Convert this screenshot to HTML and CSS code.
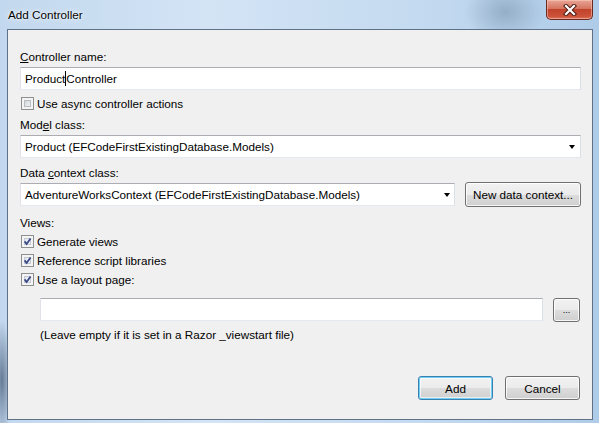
FILE: index.html
```html
<!DOCTYPE html>
<html lang="en">
<head>
    <meta charset="UTF-8">
    <meta name="viewport" content="width=device-width, initial-scale=1.0">
    <title>Add Controller</title>
    <link rel="stylesheet" href="styles.css">
</head>
<body>
    <div class="window">
        <div class="title-bar">
            <span class="title">Add Controller</span>
            <button class="close-btn" aria-label="Close">
                <svg width="14" height="12" viewBox="0 0 14 12">
                    <path d="M3 2 L11 10 M11 2 L3 10" stroke="#4b1d14" stroke-width="4.2" stroke-linecap="square"/>
                    <path d="M3 2 L11 10 M11 2 L3 10" stroke="#fff" stroke-width="2.2" stroke-linecap="square"/>
                </svg>
            </button>
        </div>

        <div class="client">
            <label class="field-label"><u>C</u>ontroller name:</label>
            <div class="textbox">Product<span class="caret"></span>Controller</div>

            <div class="check-row async-row">
                <span class="checkbox"></span>
                <span>Use async controller actions</span>
            </div>

            <label class="field-label model-label">Mod<u>e</u>l class:</label>
            <div class="textbox dropdown">
                <span>Product (EFCodeFirstExistingDatabase.Models)</span>
                <span class="arrow"></span>
            </div>

            <label class="field-label context-label">Data <u>c</u>ontext class:</label>
            <div class="context-row">
                <div class="textbox dropdown">
                    <span>AdventureWorksContext (EFCodeFirstExistingDatabase.Models)</span>
                    <span class="arrow"></span>
                </div>
                <button class="btn new-context-btn">New data context...</button>
            </div>

            <label class="field-label views-label">Views:</label>
            <div class="views-group">
                <div class="check-row">
                    <span class="checkbox checked">
                        <svg width="11" height="11" viewBox="0 0 11 11"><path d="M2.6 5.4 L4.6 8 L8.6 2.4" fill="none" stroke="#3c4a86" stroke-width="1.8"/></svg>
                    </span>
                    <span>Generate views</span>
                </div>
                <div class="check-row">
                    <span class="checkbox checked">
                        <svg width="11" height="11" viewBox="0 0 11 11"><path d="M2.6 5.4 L4.6 8 L8.6 2.4" fill="none" stroke="#3c4a86" stroke-width="1.8"/></svg>
                    </span>
                    <span>Reference script libraries</span>
                </div>
                <div class="check-row">
                    <span class="checkbox checked">
                        <svg width="11" height="11" viewBox="0 0 11 11"><path d="M2.6 5.4 L4.6 8 L8.6 2.4" fill="none" stroke="#3c4a86" stroke-width="1.8"/></svg>
                    </span>
                    <span>Use a layout page:</span>
                </div>
            </div>

            <div class="layout-row">
                <div class="textbox layout-box"></div>
                <button class="btn browse-btn">...</button>
            </div>
            <p class="hint">(Leave empty if it is set in a Razor _viewstart file)</p>

            <div class="footer">
                <button class="btn btn-default">Add</button>
                <button class="btn">Cancel</button>
            </div>
        </div>
    </div>
</body>
</html>
```

FILE: styles.css
```css
* {
    box-sizing: border-box;
    margin: 0;
    padding: 0;
}

body {
    width: 599px;
    height: 423px;
    overflow: hidden;
    font-family: "Liberation Sans", Arial, sans-serif;
    font-size: 11.7px;
    color: #000;
}

.window {
    width: 599px;
    height: 423px;
    display: flex;
    flex-direction: column;
    background:
        radial-gradient(ellipse 40px 30px at 505px 12px, rgba(120,145,170,0.55), transparent),
        radial-gradient(ellipse 10px 60px at 2px 380px, rgba(40,60,90,0.6), transparent),
        linear-gradient(to right, #c2d8ee, #d3e4f5 35%, #c4daf0 70%, #aecbe8);
}

.title-bar {
    height: 29px;
    flex: none;
    display: flex;
    align-items: flex-start;
    padding-left: 8px;
}

.title {
    line-height: 29px;
    text-shadow: 0 0 6px rgba(255,255,255,0.95), 0 0 2px #fff;
}

.close-btn {
    margin-left: auto;
    margin-right: 6px;
    width: 47px;
    height: 20px;
    border: 1px solid #6b2a20;
    border-top: none;
    border-radius: 0 0 5px 5px;
    background: linear-gradient(#e8a595, #d57560 45%, #c2432c 50%, #cc5138 85%, #d9735a);
    box-shadow: inset 0 0 0 1px rgba(255,210,200,0.5);
    display: flex;
    align-items: center;
    justify-content: center;
}

.client {
    flex: 1;
    margin: 0 6px 3px 7px;
    border: 1px solid #5f7186;
    background: #f0f0f0;
    padding: 19px 11px 19px 12px;
    display: flex;
    flex-direction: column;
}

.field-label {
    display: block;
    line-height: 16px;
}

.textbox {
    height: 23px;
    margin-top: 2px;
    background: #fff;
    border: 1px solid;
    border-color: #abadb3 #dbdfe6 #e3e9ef #e2e3ea;
    padding-left: 4px;
    line-height: 21px;
    white-space: nowrap;
}

.caret {
    display: inline-block;
    width: 1px;
    height: 15px;
    background: #000;
    vertical-align: -3px;
}

.dropdown {
    display: flex;
    align-items: center;
    justify-content: space-between;
    padding-right: 5px;
}

.arrow {
    width: 0;
    height: 0;
    border-left: 3.5px solid transparent;
    border-right: 3.5px solid transparent;
    border-top: 4px solid #000;
}

.check-row {
    display: flex;
    align-items: center;
    gap: 3px;
    height: 19px;
    padding-left: 1px;
}

.async-row {
    height: 16px;
    margin-top: 5px;
}

.checkbox {
    width: 13px;
    height: 13px;
    flex: none;
    border: 1px solid #8e8f8f;
    padding: 2px;
    background: linear-gradient(135deg, #cdd0d4, #f7f7f7) content-box, #f4f4f4;
    box-shadow: inset 0 0 0 2px #f4f4f4, inset 0 0 0 3px #b7bcc2;
    display: flex;
    align-items: center;
    justify-content: center;
}

.checkbox.checked {
    padding: 0;
    background: linear-gradient(135deg, #dfe4ee, #f7f8fb) content-box, #f4f4f4;
    box-shadow: inset 0 0 0 2px #f4f4f4, inset 0 0 0 3px #c3c8d2;
}

.model-label {
    margin-top: 6px;
}

.context-label {
    margin-top: 7px;
}

.context-row {
    display: flex;
    align-items: center;
    gap: 10px;
    height: 25px;
    margin-top: 1px;
}

.context-row .dropdown {
    flex: 1;
    margin-top: 0;
    padding-right: 4px;
}

.views-label {
    margin-top: 8px;
}

.views-group {
    margin-top: 1px;
}

.layout-row {
    display: flex;
    align-items: flex-start;
    gap: 10px;
    margin: 9px 1px 0 20px;
}

.layout-box {
    flex: 1;
    margin-top: 0;
}

.hint {
    margin: 5px 0 0 20px;
    line-height: 16px;
}

.btn {
    height: 24px;
    border: 1px solid #707070;
    border-radius: 3px;
    background: linear-gradient(#f2f2f2, #ebebeb 50%, #dddddd 50%, #cfcfcf);
    box-shadow: inset 0 0 0 1px rgba(255,255,255,0.8);
    font: inherit;
    color: #000;
}

.new-context-btn {
    width: 116px;
    height: 25px;
    flex: none;
}

.browse-btn {
    width: 27px;
    flex: none;
    font-size: 9px;
    line-height: 18px;
}

.footer {
    margin-top: auto;
    display: flex;
    justify-content: flex-end;
    gap: 12px;
    padding-right: 1px;
}

.footer .btn {
    width: 75px;
}

.btn-default {
    border-color: #3c7fb1;
    box-shadow: inset 0 0 0 1px #6fd0f3, inset 0 0 0 2px rgba(255,255,255,0.6);
}
```
